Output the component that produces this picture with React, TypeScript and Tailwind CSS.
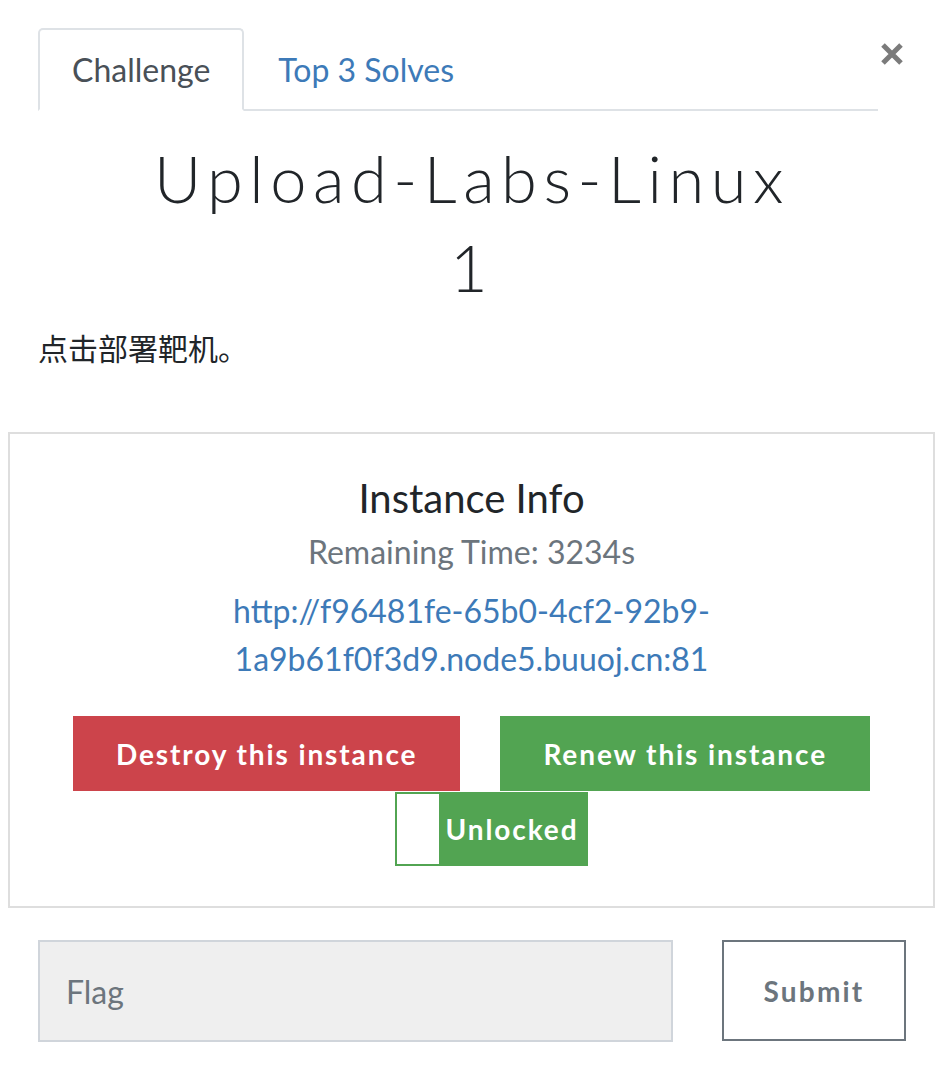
import { useState } from 'react';

const LATO = "font-['Lato','Noto_Sans','Noto_Sans_CJK_SC',sans-serif]";

function CloseIcon() {
  return (
    <svg width="24" height="24" viewBox="0 0 24 24" fill="none" stroke="#7b7b7b" strokeWidth="5" strokeLinecap="butt">
      <path d="M3 3 21 21M21 3 3 21" />
    </svg>
  );
}

export default function App() {
  const [tab, setTab] = useState<'challenge' | 'solves'>('challenge');
  const [flag, setFlag] = useState('');

  return (
    <div className={`w-[936px] min-h-[1070px] bg-white text-[#212529] ${LATO}`}>
      {/* Tabs */}
      <div className="flex items-start pl-[38px] pr-[32px] pt-[28px]">
        <ul className="flex flex-1 border-b-2 border-[#dee2e6]">
          <li className="-mb-[2px]">
            <button
              onClick={() => setTab('challenge')}
              className={`flex h-[83px] items-center rounded-t-[5px] border-2 px-[32px] text-[32px] leading-[48px] ${
                tab === 'challenge'
                  ? 'border-[#dee2e6] border-b-white bg-white text-[#495057]'
                  : 'border-transparent text-[#3d7ab8]'
              }`}
            >
              Challenge
            </button>
          </li>
          <li className="-mb-[2px]">
            <button
              onClick={() => setTab('solves')}
              className={`flex h-[83px] items-center rounded-t-[5px] border-2 px-[32px] text-[32px] leading-[48px] ${
                tab === 'solves'
                  ? 'border-[#dee2e6] border-b-white bg-white text-[#495057]'
                  : 'border-transparent text-[#3d7ab8]'
              }`}
            >
              Top 3 Solves
            </button>
          </li>
        </ul>
        <button className="ml-[2px] mt-[14px]">
          <CloseIcon />
        </button>
      </div>

      <div className="pl-[38px] pr-[30px]">
        {/* Title */}
        <h1 className="mt-[23px] text-center text-[65px] font-light leading-[89px] tracking-[6.5px] text-[#212529]">
          Upload-Labs-Linux
          <br />
          1
        </h1>

        <p className="mt-[13px] font-['Noto_Sans_CJK_SC',sans-serif] text-[30px] leading-[45px] text-[#212529]">
          点击部署靶机。
        </p>

        {/* Instance box */}
        <div className="-ml-[30px] -mr-[29px] mt-[62px] border-2 border-[#dedede] pb-[40px] pt-[40px] text-center">
          <h4 className="text-[40px] leading-[48px] text-[#212529]">Instance Info</h4>
          <p className="mt-[6px] text-[32px] leading-[48px] text-[#6c757d]">Remaining Time: 3234s</p>
          <a className="mx-auto mt-[11px] block w-[500px] text-[32px] leading-[48px] text-[#3d7ab8]">
            http://f96481fe-65b0-4cf2-92b9-
            <br />
            1a9b61f0f3d9.node5.buuoj.cn:81
          </a>

          <div className="mt-[33px] flex justify-center gap-[40px]">
            <button className="h-[75px] bg-[#cc444b] px-[43px] text-[28px] font-bold tracking-[1.9px] text-white">
              Destroy this instance
            </button>
            <button className="h-[75px] bg-[#52a452] px-[43px] text-[28px] font-bold tracking-[1.9px] text-white">
              Renew this instance
            </button>
          </div>

          <div className="mt-[1px] flex justify-center">
            <label className="ml-[40px] flex h-[74px]">
              <span className="w-[44px] border-2 border-r-0 border-[#52a452] bg-white" />
              <span className="flex items-center bg-[#52a452] pl-[7px] pr-[10px] text-[28px] font-bold tracking-[1.9px] text-white">
                Unlocked
              </span>
            </label>
          </div>
        </div>

        {/* Flag form */}
        <form className="mt-[32px] flex gap-[49px]" onSubmit={(e) => e.preventDefault()}>
          <input
            value={flag}
            onChange={(e) => setFlag(e.target.value)}
            placeholder="Flag"
            className="h-[102px] w-[635px] border-2 border-[#d0d5db] bg-[#efefef] px-[26px] text-[32px] text-[#495057] outline-none placeholder:text-[#6c757d]"
          />
          <button className="h-[101px] w-[184px] border-2 border-[#6c757d] bg-white text-[28px] font-bold tracking-[2.2px] text-[#6c757d]">
            Submit
          </button>
        </form>
      </div>
    </div>
  );
}
